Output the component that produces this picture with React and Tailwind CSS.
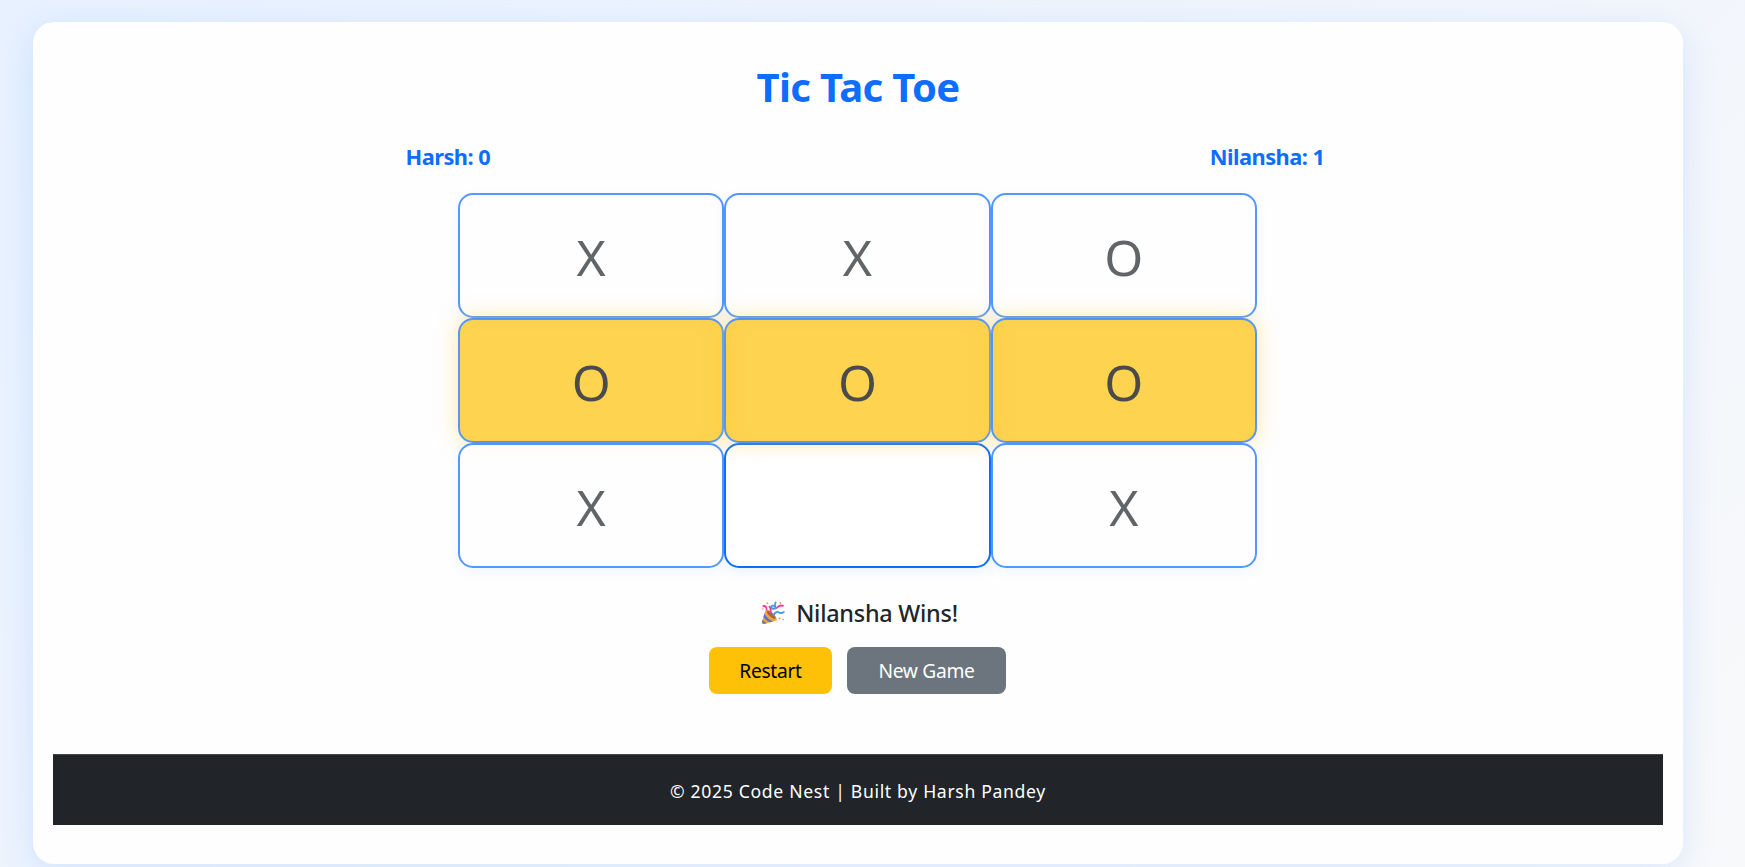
import React from "react";

const cells = ["X", "X", "O", "O", "O", "O", "X", "", "X"];
const winningCells = [3, 4, 5];

function cellClass(i, value) {
  const base =
    "h-[125px] rounded-[15px] border-2 border-[#0d6efd] pt-[3px] text-[50px] leading-none flex items-center justify-center";
  if (!value) return base + " bg-white shadow-[0_4px_12px_rgba(13,110,253,0.08)]";
  if (winningCells.includes(i))
    return base + " bg-[#ffc107] text-black opacity-70 shadow-[0_0_20px_rgba(255,203,40,0.6)]";
  return base + " bg-white text-[#212529] opacity-70 shadow-[0_4px_12px_rgba(13,110,253,0.08)]";
}

function PartyPopper() {
  return (
    <svg viewBox="0 0 24 24" className="h-6 w-6" aria-hidden="true">
      <path d="M4.4 9.4 L0.8 21.4 C0.6 22.8 1.6 23.5 3 23 L15.4 19.4 C16.6 18 14.6 14.8 11.4 11.8 C8.4 9 5.2 8 4.4 9.4Z" fill="#f0a243" />
      <path d="M3.5 12.4 L2.4 16 C4.2 18.6 6.6 20.6 9.2 21.2 L12.6 20.2 C9 19.6 5.4 16.4 3.5 12.4Z" fill="#5b70c6" />
      <path d="M1.7 18.4 L0.9 21 L3.2 23 L5.6 22.3 C4 21.6 2.6 20.2 1.7 18.4Z" fill="#5b70c6" />
      <ellipse cx="10.2" cy="13.8" rx="5.6" ry="2" transform="rotate(42 10.2 13.8)" fill="#a5683f" />
      <path d="M2.4 5 Q5.8 4.8 5.6 8.6 M9.4 11.4 Q10.6 7.6 8.4 5.6 M15.6 7 Q18.4 3.6 22 4.8" fill="none" stroke="#f0379b" strokeWidth="1.8" strokeLinecap="round" />
      <path d="M14.6 1.4 Q13.6 4 14.6 7.4 Q10.6 8.6 10.2 5.6 Q11.6 3.8 13.6 5.4 M12.4 14 Q15.4 9.6 18 11.4 Q20 12.8 22.8 11" fill="none" stroke="#3d9be9" strokeWidth="1.8" strokeLinecap="round" />
      <circle cx="6.4" cy="2.2" r="0.9" fill="#f0a03c" />
      <circle cx="2" cy="8" r="0.7" fill="#f0a03c" />
      <circle cx="19.4" cy="2" r="0.9" fill="#f0a03c" />
      <circle cx="18.6" cy="17.4" r="1" fill="#f0a03c" />
      <circle cx="22" cy="18.4" r="0.6" fill="#f0379b" />
    </svg>
  );
}

export default function App() {
  return (
    <div className="h-[867px] overflow-hidden bg-linear-135 from-[#e7f1ff] to-[#f8f9fa] pt-[22px] pr-[62px] pl-[33px] font-['Noto_Sans','Open_Sans',sans-serif]">
      <main className="flex h-[842px] flex-col items-center rounded-[21px] bg-[#fefefe] px-5 pt-[39px] shadow-[0_8px_36px_rgba(13,110,253,0.12)]">
        <h1 className="h-[52px] text-[40px] leading-[52px] font-bold tracking-[-0.65px] text-[#0d6efd]">Tic Tac Toe</h1>
        <div className="mt-[27px] ml-[14px] flex h-[34px] w-[919px] items-center justify-between text-[21.8px] leading-[34px] font-bold tracking-[-0.52px] text-[#0d6efd]">
          <span>Harsh: 0</span>
          <span>Nilansha: 1</span>
        </div>
        <div className="mt-[19px] mr-px grid w-[799px] grid-cols-3">
          {cells.map((value, i) => (
            <div key={i} className={cellClass(i, value)}>{value}</div>
          ))}
        </div>
        <p className="mt-[30px] ml-[3px] flex h-[30px] items-center gap-[11px] text-[23.4px] leading-[30px] font-medium tracking-[-0.25px] text-[#212529]">
          <PartyPopper />
          <span>Nilansha Wins!</span>
        </p>
        <div className="mt-[19px] mr-px flex gap-[15px] text-[19.2px] tracking-[-0.3px]">
          <button className="h-[47px] w-[123px] rounded-lg bg-[#ffc107] pt-[2px] text-black">Restart</button>
          <button className="h-[47px] w-[159px] rounded-lg bg-[#6c757d] pt-[2px] text-white">New Game</button>
        </div>
        <footer className="mt-[60px] flex h-[71px] w-full items-center justify-center border-t border-[#444444] bg-[#212529] pt-[3px] text-[17.6px] tracking-[0.67px] text-white">
          © 2025 Code Nest | Built by Harsh Pandey
        </footer>
      </main>
    </div>
  );
}
